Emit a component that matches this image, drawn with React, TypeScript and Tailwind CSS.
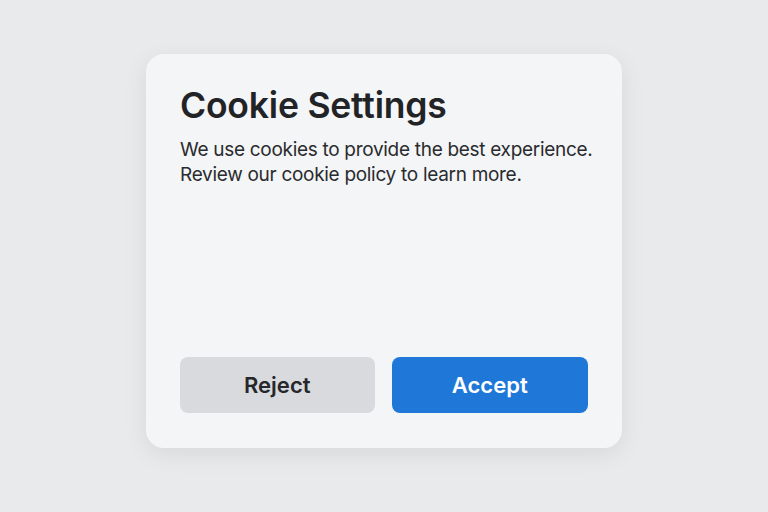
export default function App() {
  return (
    <div
      className="w-[768px] h-[512px] bg-[#e9eaec] flex items-start justify-center pt-[54px]"
      style={{ fontFamily: 'Inter, "Noto Sans", sans-serif' }}
    >
      <div className="w-[476px] h-[394px] rounded-[18px] bg-[#f4f5f7] shadow-[0_6px_24px_rgba(0,0,0,0.08)] px-[34px] pt-[30px] pb-[35px] flex flex-col">
        <h1 className="text-[35.5px] leading-[44px] font-semibold text-[#222326] tracking-[-0.2px]">Cookie Settings</h1>
        <p className="mt-[9px] text-[19px] leading-[25px] text-[#2a2b2e] whitespace-nowrap tracking-[-0.3px]">
          We use cookies to provide the best experience.
          <br />
          Review our cookie policy to learn more.
        </p>
        <div className="mt-auto flex gap-[17px]">
          <button className="w-[195px] h-[56px] rounded-[8px] bg-[#d9dadd] text-[22px] font-semibold text-[#26272a]">
            Reject
          </button>
          <button className="w-[197px] h-[56px] rounded-[8px] bg-[#1f78d8] text-[22px] font-semibold text-white">
            Accept
          </button>
        </div>
      </div>
    </div>
  )
}
